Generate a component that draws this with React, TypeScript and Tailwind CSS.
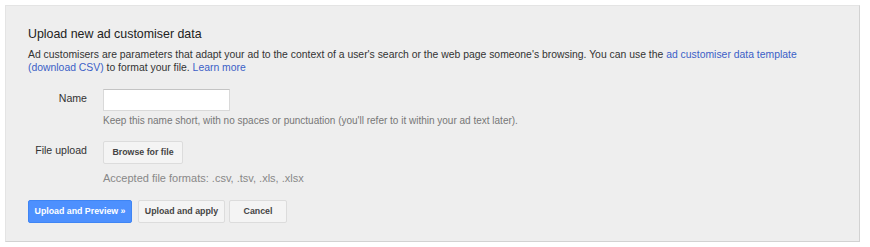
import React from "react";

const font = { fontFamily: '"Liberation Sans", Arial, sans-serif' };

const App = () => {
    return (
        <div className="bg-white w-[870px] h-[247px] p-[5px] pr-[10px]" style={font}>
            <div className="bg-[#eeeeee] border border-[#e4e4e4] border-r-[#d2d2d2] border-b-[#d2d2d2] h-[237px] pl-[22px] pr-[20px] pt-[18px]">
                <h2 className="text-[12.4px] leading-[20px] text-[#222222]">Upload new ad customiser data</h2>
                <div className="mt-[5px] text-[10.4px] leading-[12.5px] text-[#333333]">
                    <p>
                        Ad customisers are parameters that adapt your ad to the context of a user's search or the web page someone's browsing. You can use the{" "}
                        <a className="text-[#3b5fc7]">ad customiser data template</a>
                    </p>
                    <p>
                        <a className="text-[#3b5fc7]">(download CSV)</a> to format your file. <a className="text-[#3b5fc7]">Learn more</a>
                    </p>
                </div>

                {/* name row */}
                <div className="mt-[15px] flex">
                    <label className="w-[59px] text-right text-[10.6px] leading-[13px] text-[#333333] pt-[3px]">Name</label>
                    <div className="ml-[16px]">
                        <input type="text" className="block w-[127px] h-[22px] bg-white border border-[#d9d9d9] border-t-[#c4c4c4] outline-none" />
                        <p className="mt-[3px] text-[10px] leading-[13px] text-[#777777]">
                            Keep this name short, with no spaces or punctuation (you'll refer to it within your ad text later).
                        </p>
                    </div>
                </div>

                {/* file row */}
                <div className="mt-[14px] flex">
                    <label className="w-[59px] text-right text-[10.6px] leading-[13px] text-[#333333] pt-[3px]">File upload</label>
                    <div className="ml-[16px]">
                        <button className="block w-[80px] h-[23px] bg-[#f4f4f4] border border-[#dcdcdc] rounded-[2px] text-[8.8px] font-bold text-[#444444] whitespace-nowrap">
                            Browse for file
                        </button>
                        <p className="mt-[8px] text-[11px] leading-[13px] text-[#888888]">Accepted file formats: .csv, .tsv, .xls, .xlsx</p>
                    </div>
                </div>

                <div className="mt-[15px] flex">
                    <button className="w-[104px] h-[23px] bg-[#4d90fe] border border-[#3f85f4] rounded-[2px] text-[8.8px] font-bold text-white whitespace-nowrap">
                        Upload and Preview »
                    </button>
                    <button className="ml-[6px] w-[87px] h-[23px] bg-[#f4f4f4] border border-[#dcdcdc] rounded-[2px] text-[8.8px] font-bold text-[#444444] whitespace-nowrap">
                        Upload and apply
                    </button>
                    <button className="ml-[4px] w-[58px] h-[23px] bg-[#f4f4f4] border border-[#dcdcdc] rounded-[2px] text-[8.8px] font-bold text-[#444444] whitespace-nowrap">
                        Cancel
                    </button>
                </div>
            </div>
        </div>
    );
};

export default App;
